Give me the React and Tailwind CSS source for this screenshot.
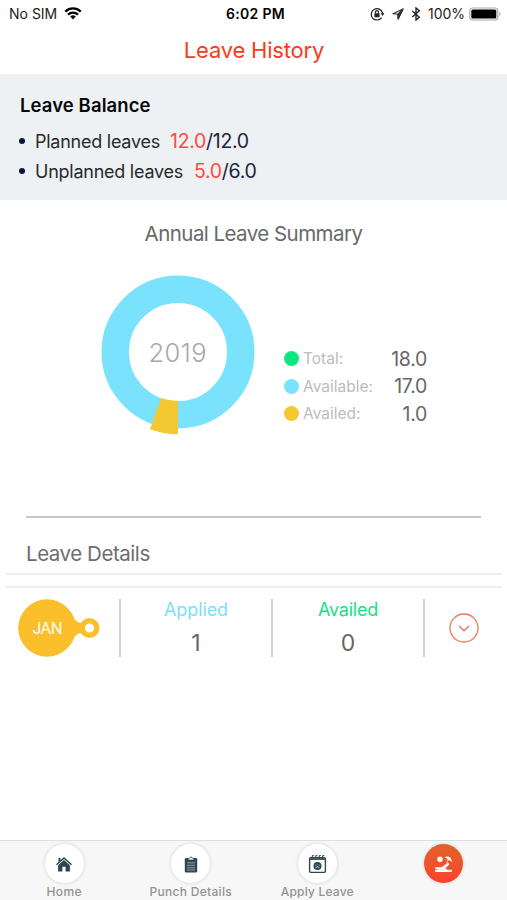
const BALANCES = [
  { label: 'Planned leaves', left: '12.0', total: '12.0', labelCls: 'w-[126px]' },
  { label: 'Unplanned leaves', left: '5.0', total: '6.0', labelCls: 'w-[150px]' },
];

const LEGEND = [
  { label: 'Total:', value: '18.0', dot: 'bg-[#0be881]' },
  { label: 'Available:', value: '17.0', dot: 'bg-[#7be2fd]' },
  { label: 'Availed:', value: '1.0', dot: 'bg-[#f4c830]' },
];

function StatusBar() {
  return (
    <header className="grid h-[27px] grid-cols-3 items-center pr-[6px] pl-[9px] text-[14px] text-[#222]">
      <div className="flex items-center gap-[7px]">
        <span>No SIM</span>
        <svg viewBox="0 0 18 13" className="h-[13px] w-[18px]" fill="none" stroke="#000" strokeWidth="2.3">
          <path d="M1.3 4.6a11 11 0 0 1 15.4 0" />
          <path d="M4 7.6a7.1 7.1 0 0 1 10 0" />
          <path d="M9 12.4 6.2 9.5a4 4 0 0 1 5.600 0z" fill="#000" stroke="none" />
        </svg>
      </div>
      <span className="pl-px text-center font-semibold tracking-[0.3px] text-black">6:02 PM</span>
      <div className="flex items-center justify-end">
        <svg viewBox="0 0 15 14" className="h-[14px] w-[15px]" fill="none" stroke="#222" strokeWidth="1.2">
          <path d="M11.6 10.6A5.7 5.7 0 1 1 12.5 6" />
          <path d="m10.6 6.2 3.8-.1-1.7 2.8z" fill="#222" stroke="none" />
          <rect x="4.4" y="6.3" width="5.2" height="3.9" rx=".4" fill="#222" stroke="none" />
          <path d="M5.5 6.6V5.2a1.5 1.5 0 0 1 3 0v1.4" />
        </svg>
        <svg viewBox="0 0 12 12" className="ml-[7px] h-[12px] w-[12px]" fill="none" stroke="#333" strokeWidth="1.1" strokeLinejoin="round">
          <path d="M11 1 1 5.8l4.8.4.4 4.8z" />
          <path d="M11 1 5.8 6.2l.4 4.8z" fill="#333" />
        </svg>
        <svg viewBox="0 0 10 14" className="ml-[7px] h-[14px] w-[10px]" fill="none" stroke="#222" strokeWidth="1.4">
          <path d="m1.3 4 7 6.2L5 13V1l3.3 2.8L1.3 10" />
        </svg>
        <span className="ml-[7px] w-[37px] whitespace-nowrap">100%</span>
        <svg viewBox="0 0 32 14" className="ml-[4px] h-[14px] w-[32px]">
          <rect x=".8" y="1" width="28" height="12" rx="3" fill="#fff" stroke="#aaa" strokeWidth="1.2" />
          <rect x="2.3" y="2.500" width="25" height="9" rx="1.6" fill="#000" />
          <path d="M30.3 5v4q1.3-.6 1.3-2t-1.3-2" fill="#aaa" />
        </svg>
      </div>
    </header>
  );
}

function Donut() {
  return (
    <svg viewBox="0 0 160 166" className="h-[166px] w-[160px]">
      <circle cx="80" cy="80" r="62.75" fill="none" stroke="#7be2fd" strokeWidth="27.5" />
      <path d="M80 129V162.3A82.3 82.3 0 0 1 51.9 157.3L63.2 126A49 49 0 0 0 80 129Z" fill="#f4c830" />
      <text x="79.500" y="89.5" textAnchor="middle" textLength="58" fontSize="25.5" fontWeight="300" fill="#a8a8a8">2019</text>
    </svg>
  );
}

function HomeIcon() {
  return (
    <svg viewBox="0 0 18 18" className="h-[18px] w-[18px]" fill="#2c474d">
      <path d="M1 9.2 9 2l8 7.2-.9 1L9 3.9 1.9 10.2z" />
      <path d="M3.5 3h2v2.3l-2 1.8z" />
      <path d="m9 5 5.9 5.2v6.3h-4.3v-4.8H7.400v4.8H3.100v-6.3z" />
    </svg>
  );
}

function ClipboardIcon() {
  return (
    <svg viewBox="0 0 14 18" className="h-[18px] w-[14px]" fill="none">
      <rect x=".8" y="3" width="12.4" height="14.5" rx="1.3" fill="#2c474d" />
      <path d="M4 5V3.3h1.3a1.8 1.8 0 0 1 3.4 0H10V5z" fill="#fff" stroke="#2c474d" strokeWidth=".8" />
      <path d="M3 7.8h8M3 10.3h8M3 12.8h8M3 15h8" stroke="#a9bcc0" strokeWidth=".8" />
    </svg>
  );
}

function CalendarIcon() {
  return (
    <svg viewBox="0 0 18 19" className="h-[20px] w-[19px]" fill="none" stroke="#2c474d">
      <rect x="1.5" y="3.5" width="15" height="14" rx="1" strokeWidth="1.3" />
      <path d="M1.5 4.800h15" strokeWidth="1.6" />
      <path d="M4 4.5V2q.8-1.3 1.5 0M7.3 4.5V2q.8-1.3 1.5 0M10.6 4.5V2q.8-1.3 1.5 0M13.8 4.5V2q.8-1.3 1.5 0" strokeWidth="1" />
      <circle cx="9" cy="11.3" r="3.8" fill="#2c474d" stroke="none" />
      <path d="M7.5 10v.8M10.5 10v.8M7.2 13q1.8-1.8 3.6 0" stroke="#fff" strokeWidth=".7" />
    </svg>
  );
}

function BeachIcon() {
  return (
    <svg viewBox="0 0 19 18" className="h-[18px] w-[19px]" fill="#fff">
      <circle cx="6" cy="4.300" r="2.700" />
      <path d="M10.600 2.600c2.800-2.600 7.300-.4 7.300 4.300l-1.900-1.500-1.500-.2-1.500-1.600z" />
      <path d="m14.400 4-1.900 4.500" stroke="#fff" strokeWidth=".7" />
      <path d="M1.200 12.300h6.400l6.500-4.800 1.300 1.700-4.200 4.400 2.300 1.200h4.300V17H1.200v-2.300l5-.6H1.200z" />
    </svg>
  );
}

const TABS = [
  { label: 'Home', icon: HomeIcon, cls: 'tracking-[0.4px]' },
  { label: 'Punch Details', icon: ClipboardIcon, cls: 'tracking-[0.3px]' },
  { label: 'Apply Leave', icon: CalendarIcon, cls: 'tracking-[0.2px]' },
  { label: '', icon: BeachIcon, active: true },
];

function TabBar() {
  return (
    <nav className="grid h-[60px] shrink-0 grid-cols-4 border-t border-[#dcdfdf] bg-[#f7f7f7] pl-px">
      {TABS.map(({ label, icon: Icon, active, cls }, index) => (
        <div key={index} className="flex flex-col items-center pt-[3px]">
          <span
            className={`flex h-[39px] w-[39px] shrink-0 items-center justify-center rounded-full shadow-[0_0_3px_1px_#dce2e2] ${
              active ? 'bg-linear-to-b from-[#e0622a] to-[#fa402d]' : 'bg-white'
            }`}
          >
            <Icon />
          </span>
          <span className={`mt-px text-[12px] leading-[16px] font-medium whitespace-nowrap text-[#929292] ${cls || ''}`}>{label}</span>
        </div>
      ))}
    </nav>
  );
}

function LeaveCount({ label, value, cls }) {
  return (
    <div className="flex flex-1 flex-col items-center border-r-2 border-[#d0d0d0]">
      <span className={`mt-px text-[18px] leading-[20px] ${cls}`}>{label}</span>
      <span className="mt-[11px] text-[23px] leading-[24px] text-[#666]">{value}</span>
    </div>
  );
}

export default function App() {
  return (
    <div className="flex h-[900px] w-[507px] flex-col overflow-hidden bg-white font-['Inter','Liberation_Sans',sans-serif]">
      <StatusBar />
      <h1 className="h-[47px] pt-[8px] pl-px text-center text-[22px] leading-[30px] tracking-[-0.2px] text-[#f83a1b]">Leave History</h1>

      <section className="h-[126px] bg-[#edf1f4] pt-[18px] pl-[19px]">
        <h2 className="pl-px text-[18.5px] leading-[26px] font-semibold tracking-[0.1px] text-[#080808]">Leave Balance</h2>
        <ul className="mt-[8px]">
          {BALANCES.map((item) => (
            <li key={item.label} className="flex h-[30px] items-center whitespace-nowrap">
              <span className="h-[6px] w-[6px] rounded-full bg-[#07143c]" />
              <span className={`ml-[10px] text-[18px] tracking-[-0.25px] text-[#292929] ${item.labelCls}`}>{item.label}</span>
              <span className="mt-[2px] ml-[9px] text-[19.5px] tracking-[-0.3px] text-[#1b2340]">
                <span className="text-[#ff4a42]">{item.left}</span>/{item.total}
              </span>
            </li>
          ))}
        </ul>
      </section>

      <section className="mx-[26px] flex h-[318px] flex-col border-b-2 border-[#c8c8c8] pt-[19px]">
        <h2 className="text-center text-[20.5px] leading-[30px] tracking-[-0.55px] text-[#696969]">Annual Leave Summary</h2>
        <div className="flex pt-[23px] pl-[72px]">
          <Donut />
          <div className="mt-[73px] ml-[26px] w-[143px]">
            {LEGEND.map((item) => (
              <div key={item.label} className="flex h-[27.5px] items-center">
                <span className={`h-[15px] w-[15px] rounded-full ${item.dot}`} />
                <span className="ml-[4px] text-[15.5px] text-[#bcbcbc]">{item.label}</span>
                <span className="mt-px ml-auto text-[19.5px] tracking-[-0.3px] text-[#666]">{item.value}</span>
              </div>
            ))}
          </div>
        </div>
      </section>

      <section className="flex-1">
        <h2 className="h-[55px] pt-[21px] pl-[26px] text-[20.5px] leading-[30px] tracking-[-0.45px] text-[#6d6d6d]">Leave Details</h2>
        <div className="mr-[5px] ml-[6px] h-[15px] border-y-2 border-[#eee]" />
        <div className="mt-[11px] flex h-[58px] pl-[18px]">
          <div className="w-[103px] border-r-2 border-[#d0d0d0]">
            <svg viewBox="0 0 84 58" className="h-[58px] w-[84px]">
              <circle cx="29" cy="29" r="28.8" fill="#fbbf2b" />
              <path d="M54 15q3 9 10 9v10q-7 0-10 9z" fill="#fbbf2b" />
              <circle cx="71.5" cy="29" r="7.3" fill="#fff" stroke="#fbbf2b" strokeWidth="5.4" />
              <text x="29.5" y="34.5" textAnchor="middle" textLength="30" fontSize="15.5" fill="#fff">JAN</text>
            </svg>
          </div>
          <LeaveCount label="Applied" value="1" cls="text-[#7edffb] tracking-[-0.1px]" />
          <LeaveCount label="Availed" value="0" cls="text-[#18df86] tracking-[-0.2px]" />
          <div className="flex w-[82px] items-center justify-center pr-[5px]">
            <svg viewBox="0 0 30 30" className="h-[30px] w-[30px]" fill="none" stroke="#ee7558" strokeWidth="1.3">
              <circle cx="15" cy="15" r="14" />
              <path d="m10 13 5 4.8 5-4.8" />
            </svg>
          </div>
        </div>
      </section>

      <TabBar />
    </div>
  );
}
